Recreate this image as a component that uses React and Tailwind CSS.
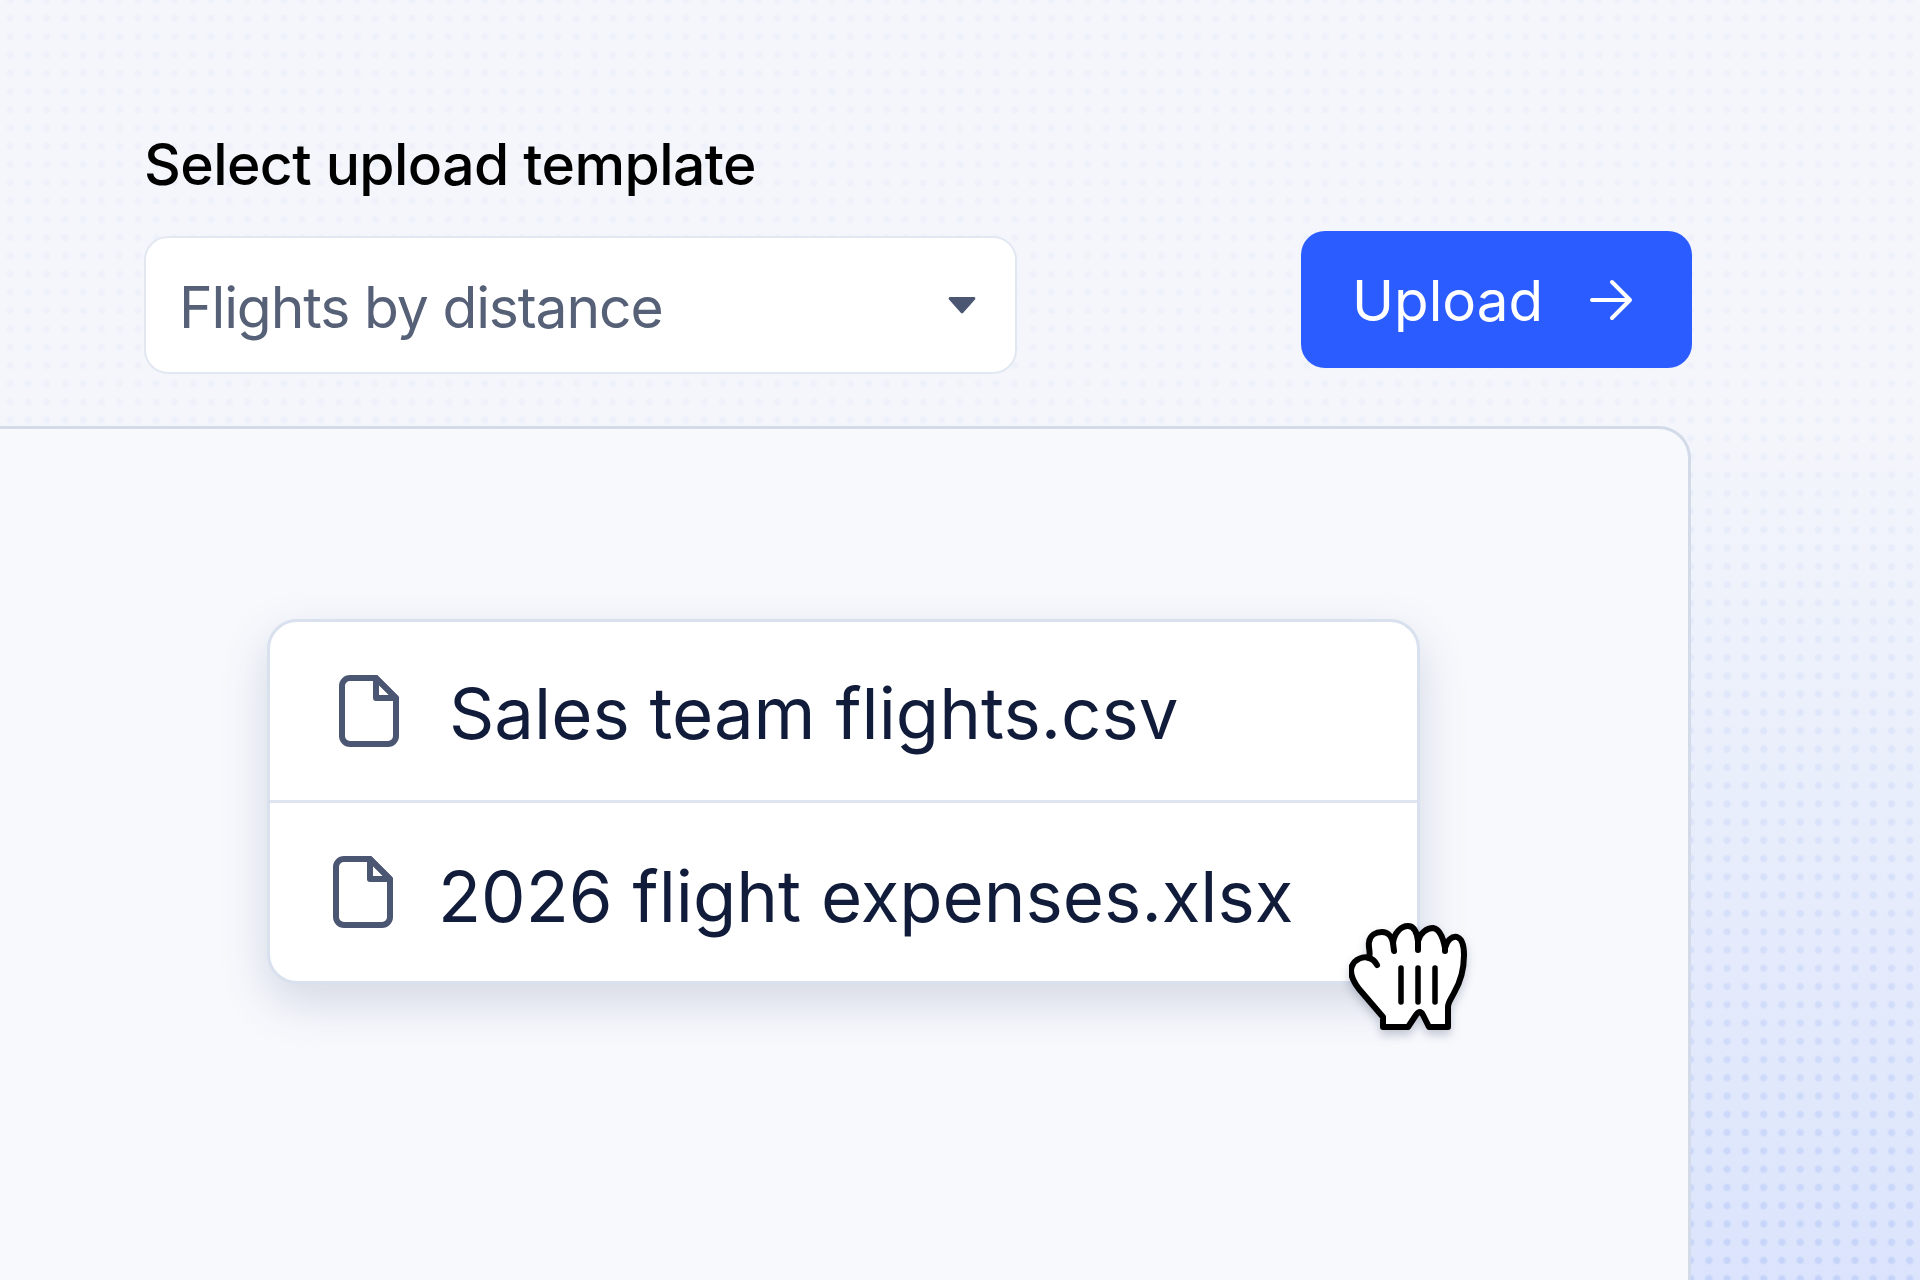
import React from 'react';

function FileIcon({ className }) {
  return (
    <svg viewBox="0 0 60 72" fill="none" className={className}>
      <path
        d="M11 3h26l20 20v38a8 8 0 0 1-8 8H11a8 8 0 0 1-8-8V11a8 8 0 0 1 8-8Z"
        stroke="#4b5672"
        strokeWidth="6"
        strokeLinejoin="round"
      />
      <path d="M37 3v20h20Z" stroke="#4b5672" strokeWidth="6" strokeLinejoin="round" />
    </svg>
  );
}

function GrabCursor() {
  return (
    <svg
      viewBox="0 0 120 108"
      fill="none"
      className="absolute left-[1349px] top-[923px] w-[120px] h-[108px] drop-shadow-[0_5px_5px_rgba(40,50,90,0.25)]"
    >
      <path
        d="M34 104V94L10 66C4 58 0 50 3 43C6 36 14 33 20 35C22 30 19 24 20 19C21 12 27 9 33 9C39 9 43 14 44 20C45 10 52 3 59 3C65 3 68 10 69 18C71 10 78 5 84 5C90 6 94 14 96 25C98 17 103 13 108 14C114 16 115 24 115 32C115 46 112 58 105 70C102 76 99 79 99 84V104H80L74 92C72 88 70 88 67 92L59 104Z"
        fill="white"
        stroke="black"
        strokeWidth="6"
        strokeLinejoin="round"
        strokeLinecap="round"
      />
      <path
        d="M20 35C24 36 26 38 28 42M44 20L45 28M69 18V27M96 25V28"
        stroke="black"
        strokeWidth="6"
        strokeLinecap="round"
      />
      <path
        d="M52 45V79M69 45V79M86 45V79"
        stroke="black"
        strokeWidth="5.500"
        strokeLinecap="round"
      />
    </svg>
  );
}

export default function App() {
  return (
    <div className="relative w-full h-[1280px] overflow-hidden flex flex-col font-['Inter',sans-serif] bg-[linear-gradient(180deg,#f4f6fb_0%,#f4f6fb_32%,#dbe4fc_100%)]">
      {/* dot grid, stronger toward the bottom */}
      <div className="absolute inset-0 bg-[radial-gradient(circle,rgba(95,135,240,0.42)_0,rgba(95,135,240,0.42)_2.6px,rgba(95,135,240,0)_4.5px)] bg-[size:18.28px_18.28px] bg-[position:1px_-9px] [mask-image:linear-gradient(180deg,rgba(0,0,0,0.09)_0%,rgba(0,0,0,0.09)_32%,rgba(0,0,0,0.42)_100%)]" />

      <div className="relative flex items-end pl-[144px] pt-[133px]">
        <div className="w-[873px]">
          <div className="text-[57px] leading-[64px] font-medium text-black mb-[39px] tracking-[-0.01em]">
            Select upload template
          </div>
          <div className="h-[138px] rounded-[24px] border-2 border-[#e2e8f2] bg-white flex items-center justify-between pl-[33px] pr-[39px]">
            <span className="text-[57px] text-[#566077] tracking-[-0.02em] translate-y-[3px]">Flights by distance</span>
            <svg viewBox="0 0 28 18" className="w-[28px] h-[18px]">
              <path d="M2 1h24a1.500 1.500 0 0 1 1 2.500L15 17a1.500 1.500 0 0 1-2 0L1 3.500A1.500 1.500 0 0 1 2 1Z" fill="#4b5672" />
            </svg>
          </div>
        </div>
        <button className="ml-[284px] mb-[6px] w-[391px] h-[137px] rounded-[24px] bg-[#2b5cff] text-white flex items-center pl-[51px]">
          <span className="text-[56.500px] leading-none translate-y-[2px]">Upload</span>
          <svg viewBox="0 0 44 44" fill="none" className="ml-[46px] w-[44px] h-[44px]">
            <path
              d="M3 22h37M23 4l18 18-18 18"
              stroke="white"
              strokeWidth="4"
              strokeLinecap="round"
              strokeLinejoin="round"
            />
          </svg>
        </button>
      </div>

      <div className="relative mt-[52px] flex-1 w-[1691px] rounded-tr-[32px] border-t-[3px] border-r-[3px] border-[#d3dbe9] bg-[#f7f9fd] pl-[267px] pt-[190px]">
        <div className="w-[1153px] h-[365px] rounded-[30px] border-[3px] border-[#d9e0ee] bg-white shadow-[0_18px_48px_rgba(70,85,125,0.2)] flex flex-col">
          <div className="h-[181px] border-b-[3px] border-[#dfe5f0] flex items-center pl-[69px]">
            <FileIcon className="w-[60px] h-[72px] shrink-0" />
            <span className="ml-[50px] text-[70.700px] leading-none text-[#111c3b] translate-y-[3px]">Sales team flights.csv</span>
          </div>
          <div className="flex-1 flex items-center pl-[63px]">
            <FileIcon className="w-[60px] h-[72px] shrink-0" />
            <span className="ml-[45px] text-[70.700px] leading-none text-[#111c3b] translate-y-[5px]">2026 flight expenses.xlsx</span>
          </div>
        </div>
      </div>

      <GrabCursor />
    </div>
  );
}
